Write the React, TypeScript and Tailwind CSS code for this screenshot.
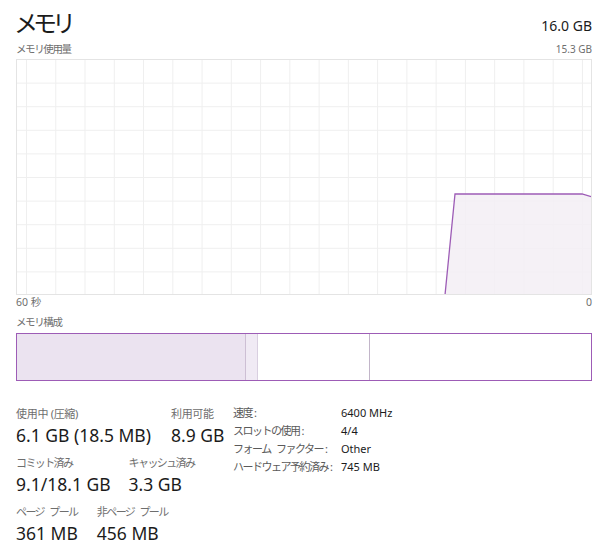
import React from "react"

const font = { fontFamily: '"Noto Sans", "Noto Sans CJK JP", sans-serif' }

const rows = 10
const cols = 20

function UsageChart() {
  const w = 576
  const h = 236
  const hLines = Array.from({ length: rows - 1 }, (_, i) => ((i + 1) * h) / rows)
  const vLines = Array.from({ length: cols }, (_, i) => 10 + i * 29.26)
  const pts = "429,236 439,135 566,135 576,138"

  return (
    <svg width={w} height={h} viewBox={`0 0 ${w} ${h}`} className="block">
      {hLines.map((y) => (
        <line key={"h" + y} x1={0} x2={w} y1={y + 0.5} y2={y + 0.5} stroke="#efefef" />
      ))}
      {vLines.map((x) => (
        <line key={"v" + x} x1={x + 0.5} x2={x + 0.5} y1={0} y2={h} stroke="#efefef" />
      ))}
      <polygon points={`${pts} 576,236`} fill="#f3eff5" fillOpacity={0.85} />
      <polyline points={pts} fill="none" stroke="#9d5cb6" strokeWidth={1.3} />
      <rect x={0.5} y={0.5} width={w - 1} height={h - 1} fill="none" stroke="#e4e4e4" />
    </svg>
  )
}

function Stat({ label, value, kana }: { label: string; value: string; kana?: boolean }) {
  return (
    <div className="flex flex-col">
      <span
        className={
          "text-[11px] leading-[16px] text-[#6e6e6e] whitespace-pre " +
          (kana ? "tracking-[-1.6px] [word-spacing:4px]" : "tracking-[-0.3px]")
        }
      >
        {label}
      </span>
      <span className="text-[17.5px] leading-[26px] text-[#1b1b1b] whitespace-nowrap">{value}</span>
    </div>
  )
}

const info = [
  ["速度", "6400 MHz"],
  ["スロットの使用", "4/4"],
  ["フォーム ファクター", "Other"],
  ["ハードウェア予約済み", "745 MB"],
]

export default function App() {
  return (
    <div className="w-[600px] h-[544px] overflow-hidden bg-white pl-4 pr-2 pt-[6px]" style={font}>
      {/* header */}
      <div className="flex items-end justify-between">
        <h1 className="-ml-[2px] text-[24px] leading-[34px] tracking-[-5px] font-normal text-[#1b1b1b]">メモリ</h1>
        <span className="text-[14px] leading-[22px] text-[#1b1b1b] mb-[3px]">16.0 GB</span>
      </div>
      <div className="flex justify-between text-[10.5px] leading-[16px] text-[#6e6e6e] mt-[1px] mb-[2px]">
        <span className="tracking-[-1.4px]">メモリ使用量</span>
        <span className="text-[10px]">15.3 GB</span>
      </div>

      <UsageChart />

      <div className="flex justify-between text-[10.5px] leading-[16px] text-[#6e6e6e] mt-[-1px]">
        <span>60 秒</span>
        <span>0</span>
      </div>
      <div className="text-[10.5px] leading-[16px] text-[#6e6e6e] mt-[4px] tracking-[-1.4px]">メモリ構成</div>

      {/* composition bar */}
      <div className="mt-[3px] flex h-[48px] border border-[#9d5cb6]">
        <div className="w-[229px] bg-[#ebe3f0] border-r border-[#cdbfd4]" />
        <div className="w-[12px] bg-[#f0eaf4] border-r border-[#d9cfe0]" />
        <div className="w-[112px] bg-white border-r border-[#c2b5c9]" />
        <div className="flex-1 bg-white" />
      </div>

      {/* stats */}
      <div className="mt-[25px] flex">
        <div className="w-[217px] flex flex-col gap-[7px]">
          <div className="flex gap-5">
            <Stat label="使用中 (圧縮)" value="6.1 GB (18.5 MB)" />
            <Stat label="利用可能" value="8.9 GB" />
          </div>
          <div className="flex gap-[18px]">
            <Stat label="コミット済み" value="9.1/18.1 GB" kana />
            <Stat label="キャッシュ済み" value="3.3 GB" kana />
          </div>
          <div className="flex gap-[19px]">
            <Stat label="ページ プール" value="361 MB" kana />
            <Stat label="非ページ プール" value="456 MB" kana />
          </div>
        </div>
        <div className="grid grid-cols-[108px_auto] text-[11px] leading-[18px] text-[#1b1b1b] mt-[-2px] h-fit">
          {info.map(([k, v]) => (
            <React.Fragment key={k}>
              <span className="text-[#5a5a5a] whitespace-pre">
                <span className="tracking-[-1.5px] [word-spacing:4px]">{k}</span>
                <span className="ml-[2px]">:</span>
              </span>
              <span>{v}</span>
            </React.Fragment>
          ))}
        </div>
      </div>
    </div>
  )
}
